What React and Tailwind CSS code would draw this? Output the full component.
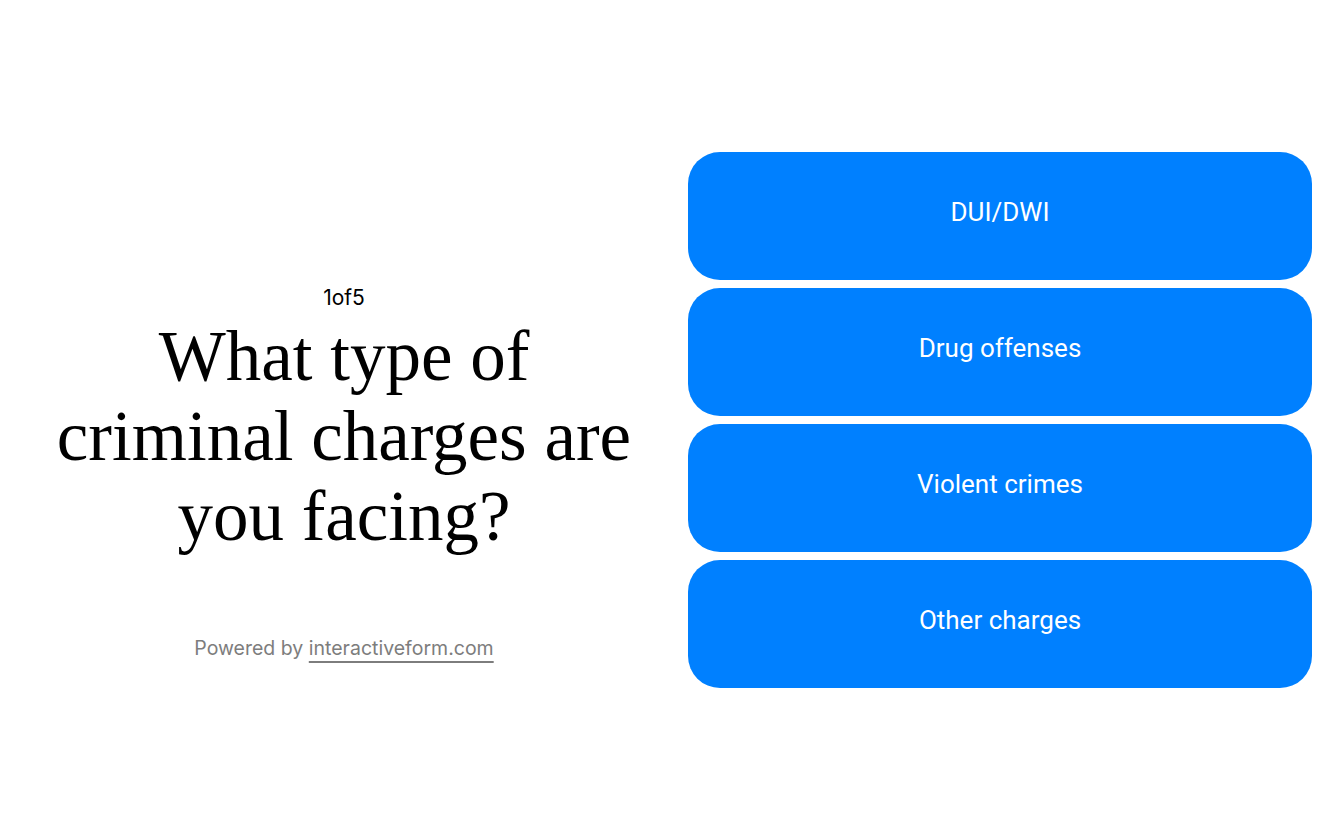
const options = ['DUI/DWI', 'Drug offenses', 'Violent crimes', 'Other charges'];

export default function App() {
  return (
    <div className="min-h-[840px] bg-white flex items-center px-8 gap-8">
      <div className="w-[624px] flex flex-col items-center pt-[106px]">
        <p className="text-[21px] leading-6 text-black" style={{ fontFamily: 'Inter, "Liberation Sans", sans-serif' }}>
          1of5
        </p>
        <h1 className="mt-[6px] text-center text-[71px] leading-[80px] text-black" style={{ fontFamily: '"Liberation Serif", serif' }}>
          What type of criminal charges are you facing?
        </h1>
        <p className="mt-[80px] text-[19.5px] leading-6 text-[#7d7d7d]" style={{ fontFamily: 'Inter, "Liberation Sans", sans-serif' }}>
          Powered by{' '}
          <a href="#" className="underline decoration-2 underline-offset-[6px] decoration-[#7d7d7d]">interactiveform.com</a>
        </p>
      </div>
      <div className="w-[624px] flex flex-col gap-2">
        {options.map((o) => (
          <button
            key={o}
            className="h-32 w-full rounded-[32px] bg-[#0080ff] text-white text-[26px] pb-2 cursor-pointer"
            style={{ fontFamily: 'Roboto, "Liberation Sans", sans-serif' }}
          >
            {o}
          </button>
        ))}
      </div>
    </div>
  );
}
